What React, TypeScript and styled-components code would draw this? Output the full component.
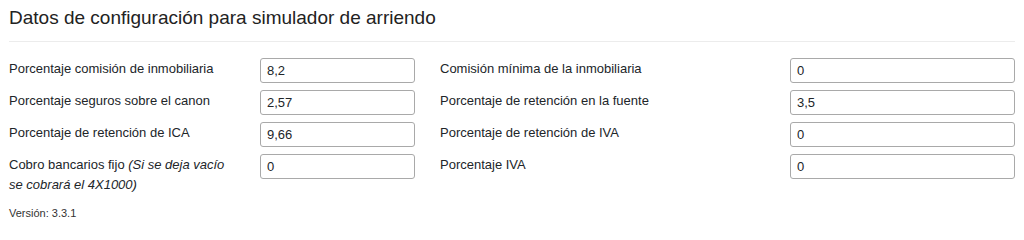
import styled, { createGlobalStyle } from "styled-components";

const TEXT_COLOR = "#212529";
const BORDER_COLOR = "#a9a9a9";

const GlobalStyle = createGlobalStyle`
  * {
    box-sizing: border-box;
  }

  body {
    margin: 0;
    background: #ffffff;
    color: ${TEXT_COLOR};
    font-family: "Liberation Sans", Arial, sans-serif;
  }
`;

const Page = styled.div`
  padding: 0 9px;
`;

const Title = styled.h2`
  margin: 0;
  padding-top: 7px;
  font-size: 19px;
  font-weight: 400;
  line-height: 22px;
  color: #222222;
`;

const Divider = styled.hr`
  margin: 12px 0 16px;
  border: none;
  border-top: 1px solid #ececec;
`;

const FormGrid = styled.div`
  display: grid;
  grid-template-columns: 251px 155px 375px 1fr;
  row-gap: 7px;
  align-items: start;
`;

const Label = styled.label<{ $secondColumn?: boolean }>`
  padding-top: 1px;
  padding-left: ${({ $secondColumn }) => ($secondColumn ? "25px" : "0")};
  padding-right: 20px;
  font-size: 13px;
  line-height: 20px;
  color: ${TEXT_COLOR};

  em {
    font-style: italic;
  }
`;

const Input = styled.input`
  width: 100%;
  height: 25px;
  margin: 0;
  padding: 0 6px;
  border: 1px solid ${BORDER_COLOR};
  border-radius: 3px;
  background: #ffffff;
  font-family: inherit;
  font-size: 13px;
  color: ${TEXT_COLOR};
  outline: none;
`;

const Version = styled.p`
  margin: 10px 0 0;
  font-size: 11px;
  line-height: 16px;
  color: #333333;
`;

interface Field {
  label: React.ReactNode;
  value: string;
}

const leftFields: Field[] = [
  { label: "Porcentaje comisión de inmobiliaria", value: "8,2" },
  { label: "Porcentaje seguros sobre el canon", value: "2,57" },
  { label: "Porcentaje de retención de ICA", value: "9,66" },
  {
    label: (
      <>
        Cobro bancarios fijo <em>(Si se deja vacío se cobrará el 4X1000)</em>
      </>
    ),
    value: "0",
  },
];

const rightFields: Field[] = [
  { label: "Comisión mínima de la inmobiliaria", value: "0" },
  { label: "Porcentaje de retención en la fuente", value: "3,5" },
  { label: "Porcentaje de retención de IVA", value: "0" },
  { label: "Porcentaje IVA", value: "0" },
];

const App = () => {
  return (
    <>
      <GlobalStyle />
      <Page>
        <Title>Datos de configuración para simulador de arriendo</Title>
        <Divider />
        <FormGrid>
          {leftFields.flatMap((field, i) => [
            <Label key={`l-${i}`}>{field.label}</Label>,
            <Input key={`li-${i}`} defaultValue={field.value} />,
            <Label key={`r-${i}`} $secondColumn>
              {rightFields[i].label}
            </Label>,
            <Input key={`ri-${i}`} defaultValue={rightFields[i].value} />,
          ])}
        </FormGrid>
        <Version>Versión: 3.3.1</Version>
      </Page>
    </>
  );
};

export default App;
